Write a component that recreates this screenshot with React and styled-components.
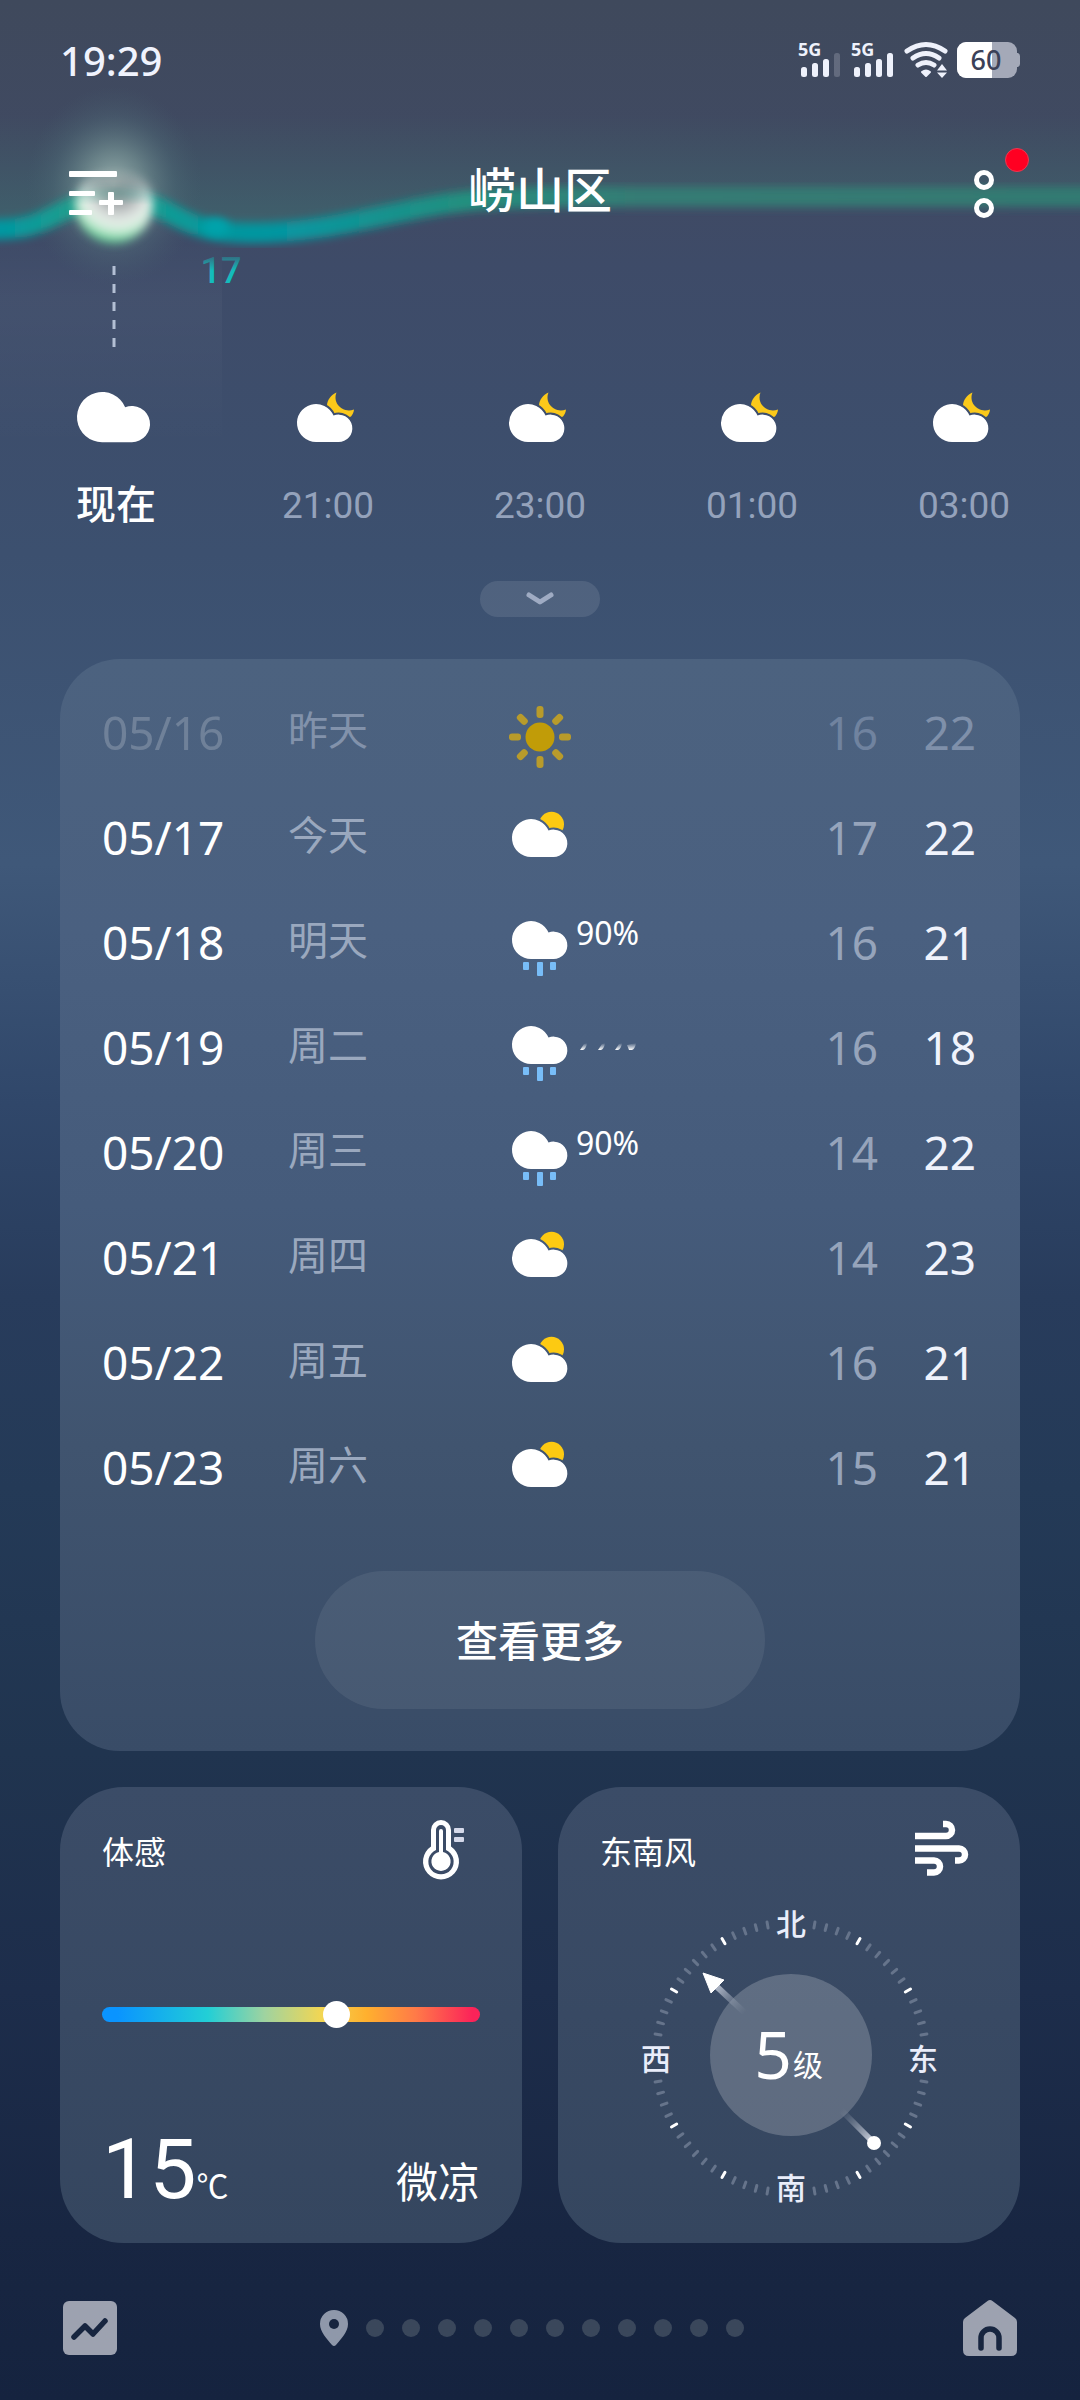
import styled, { createGlobalStyle } from "styled-components";

const CLOUD = "M19 38A19 19 0 1 1 36.5 11.6A13.7 13.7 0 1 1 41.3 38Z";

const hours = [
  { label: "现在", icon: "cloud" },
  { label: "21:00", icon: "night" },
  { label: "23:00", icon: "night" },
  { label: "01:00", icon: "night" },
  { label: "03:00", icon: "night" },
];

const days = [
  { date: "05/16", day: "昨天", icon: "sun", low: 16, high: 22, past: true },
  { date: "05/17", day: "今天", icon: "partly", low: 17, high: 22 },
  { date: "05/18", day: "明天", icon: "rain", rain: "90%", low: 16, high: 21 },
  { date: "05/19", day: "周二", icon: "rain", rolling: true, low: 16, high: 18 },
  { date: "05/20", day: "周三", icon: "rain", rain: "90%", low: 14, high: 22 },
  { date: "05/21", day: "周四", icon: "partly", low: 14, high: 23 },
  { date: "05/22", day: "周五", icon: "partly", low: 16, high: 21 },
  { date: "05/23", day: "周六", icon: "partly", low: 15, high: 21 },
];

export default function App() {
  return (
    <Page>
      <GlobalStyle />
      <TemperatureCurve />
      <StatusBar>
        <Clock>19:29</Clock>
        <StatusIcons>
          <Signal bars={3} />
          <Signal bars={4} />
          <Wifi />
          <Battery />
        </StatusIcons>
      </StatusBar>

      <Header>
        <IconButton aria-label="城市管理">
          <svg width="60" height="60" viewBox="0 0 60 60" fill="#fff">
            <rect x="3" y="11" width="48" height="6" rx="1" />
            <rect x="3" y="31" width="26" height="5" rx="1" />
            <rect x="3" y="50" width="23" height="5" rx="1" />
            <rect x="33" y="40" width="24" height="5" rx="1" />
            <rect x="42" y="32" width="6" height="23" rx="1" />
          </svg>
        </IconButton>
        <Title>崂山区</Title>
        <IconButton aria-label="更多">
          <svg
            width="60"
            height="60"
            viewBox="0 0 60 60"
            fill="none"
            stroke="#fff"
            strokeWidth="5"
          >
            <circle cx="30" cy="20" r="7.5" />
            <circle cx="30" cy="48" r="7.5" />
          </svg>
          <RedDot />
        </IconButton>
      </Header>

      <HourList>
        {hours.map((hour) => (
          <Hour key={hour.label}>
            <HourIcon type={hour.icon} />
            <HourLabel $now={hour.icon === "cloud"}>{hour.label}</HourLabel>
          </Hour>
        ))}
      </HourList>

      <ExpandButton aria-label="展开">
        <svg width="30" height="16" viewBox="0 0 30 16" fill="none">
          <path
            d="M4 4L15 11L26 4"
            stroke="#9fabc3"
            strokeWidth="5"
            strokeLinecap="round"
            strokeLinejoin="round"
          />
        </svg>
      </ExpandButton>

      <ForecastCard>
        <Forecast>
          <tbody>
            {days.map((item) => (
              <DayRow key={item.date}>
                <DateCell $past={item.past}>{item.date}</DateCell>
                <DayCell $past={item.past}>{item.day}</DayCell>
                <WeatherCell>
                  <DayIcon type={item.icon} />
                  {item.rain && <Chance>{item.rain}</Chance>}
                  {item.rolling && <RollingChance />}
                </WeatherCell>
                <LowCell $past={item.past}>{item.low}</LowCell>
                <HighCell $past={item.past}>{item.high}</HighCell>
              </DayRow>
            ))}
          </tbody>
        </Forecast>
        <MoreButton>查看更多</MoreButton>
      </ForecastCard>

      <Cards>
        <SmallCard>
          <CardHead>
            <label htmlFor="feels">体感</label>
            <Thermometer />
          </CardHead>
          <Slider id="feels" type="range" min="0" max="100" defaultValue="63" />
          <FeelsRow>
            <Degrees>
              15<small>℃</small>
            </Degrees>
            <Feeling>微凉</Feeling>
          </FeelsRow>
        </SmallCard>
        <SmallCard>
          <CardHead>
            <span>东南风</span>
            <WindIcon />
          </CardHead>
          <Compass />
        </SmallCard>
      </Cards>

      <Footer>
        <FooterButton aria-label="趋势">
          <svg width="54" height="54" viewBox="0 0 54 54">
            <rect width="54" height="54" rx="6" fill="#9da2b0" />
            <path
              d="M11 36L22 25L30 33L42 20"
              fill="none"
              stroke="#17253f"
              strokeWidth="5.5"
              strokeLinecap="round"
              strokeLinejoin="round"
            />
          </svg>
        </FooterButton>
        <Pager>
          <svg width="28" height="36" viewBox="0 0 28 36">
            <path
              d="M14 0A14 14 0 0 0 0 14C0 22 7 29 12 35Q14 37 16 35C21 29 28 22 28 14A14 14 0 0 0 14 0Z"
              fill="#8f98aa"
            />
            <circle cx="14" cy="14" r="5" fill="#17253f" />
          </svg>
          {Array.from({ length: 11 }, (_, i) => (
            <PageDot key={i} />
          ))}
        </Pager>
        <FooterButton aria-label="首页">
          <svg width="54" height="56" viewBox="0 0 54 56">
            <path
              d="M24.5 1Q27 -.8 29.5 1L52 18Q54 19.5 54 22V50Q54 56 48 56H6Q0 56 0 50V22Q0 19.5 2 18Z"
              fill="#9da2b0"
            />
            <path
              d="M18 48V38A9 9 0 0 1 36 38V48"
              fill="none"
              stroke="#17253f"
              strokeWidth="5.5"
              strokeLinecap="round"
            />
          </svg>
        </FooterButton>
      </Footer>
    </Page>
  );
}

function TemperatureCurve() {
  const line =
    "M-20 229C40 233 50 214 76 206C100 198 128 198 154 206C178 214 190 233 250 233C340 233 400 206 480 200C540 196 600 197 700 197H1100";
  return (
    <CurveSvg viewBox="0 0 1080 480" aria-hidden="true">
      <defs>
        <linearGradient id="stroke" x1="0" x2="1080" gradientUnits="userSpaceOnUse">
          <stop offset="0" stopColor="#0098a2" />
          <stop offset=".09" stopColor="#2a9f86" />
          <stop offset=".2" stopColor="#00989f" />
          <stop offset=".27" stopColor="#0796a0" />
          <stop offset=".43" stopColor="#22907f" />
          <stop offset=".6" stopColor="#367b74" />
          <stop offset="1" stopColor="#337a72" />
        </linearGradient>
        <linearGradient id="haze" x1="0" y1="115" x2="0" y2="225" gradientUnits="userSpaceOnUse">
          <stop offset="0" stopColor="#3f6a6b" stopOpacity="0" />
          <stop offset="1" stopColor="#3f6f70" stopOpacity=".6" />
        </linearGradient>
        <radialGradient id="halo">
          <stop offset="0" stopColor="#a3bab6" stopOpacity=".95" />
          <stop offset=".35" stopColor="#7d9999" stopOpacity=".65" />
          <stop offset=".7" stopColor="#54727c" stopOpacity=".3" />
          <stop offset="1" stopColor="#46606e" stopOpacity="0" />
        </radialGradient>
        <radialGradient id="ball" cx=".55" cy=".3" r=".7">
          <stop offset="0" stopColor="#89898f" />
          <stop offset=".3" stopColor="#a9adaf" />
          <stop offset=".6" stopColor="#e6ece8" />
          <stop offset=".78" stopColor="#d0eddb" />
          <stop offset=".92" stopColor="#74d6a0" />
          <stop offset="1" stopColor="#4fc18b" />
        </radialGradient>
        <linearGradient id="ball-fade" x1="0" y1="165" x2="0" y2="205" gradientUnits="userSpaceOnUse">
          <stop offset="0" stopColor="#000" />
          <stop offset="1" stopColor="#fff" />
        </linearGradient>
        <mask id="ball-mask" maskUnits="userSpaceOnUse" x="40" y="140" width="150" height="130">
          <rect x="40" y="140" width="150" height="130" fill="url(#ball-fade)" />
        </mask>
        <linearGradient id="label" x1="0" y1="254" x2="0" y2="282" gradientUnits="userSpaceOnUse">
          <stop offset="0" stopColor="#14bcbc" stopOpacity=".2" />
          <stop offset=".6" stopColor="#14bcbc" />
        </linearGradient>
        <linearGradient id="panel" x1="0" y1="240" x2="0" y2="450" gradientUnits="userSpaceOnUse">
          <stop offset="0" stopColor="#fff" stopOpacity="0" />
          <stop offset=".3" stopColor="#fff" stopOpacity=".03" />
          <stop offset="1" stopColor="#fff" stopOpacity="0" />
        </linearGradient>
        <filter id="soft" x="-20%" y="-40%" width="140%" height="180%">
          <feGaussianBlur stdDeviation="4" />
        </filter>
        <filter id="softer" x="-30%" y="-30%" width="160%" height="160%">
          <feGaussianBlur stdDeviation="5" />
        </filter>
      </defs>
      <rect y="240" width="222" height="210" fill="url(#panel)" />
      <path d={`${line}V100H-20Z`} fill="url(#haze)" />
      <ellipse cx="114" cy="186" rx="88" ry="100" fill="url(#halo)" />
      <path d={line} fill="none" stroke="url(#stroke)" strokeWidth="20" filter="url(#soft)" />
      <ellipse cx="216" cy="227" rx="13" ry="9" fill="#00a3ab" filter="url(#soft)" />
      <g mask="url(#ball-mask)">
        <circle cx="114" cy="204" r="39" fill="url(#ball)" filter="url(#softer)" />
      </g>
      <line
        x1="114"
        y1="266"
        x2="114"
        y2="348"
        stroke="#b3bfd4"
        strokeWidth="3"
        strokeDasharray="9 9"
      />
      <CurveLabel x="221" y="283" fill="url(#label)">
        17
      </CurveLabel>
    </CurveSvg>
  );
}

function Signal({ bars }) {
  return (
    <svg width="44" height="38" viewBox="0 0 44 38" fill="#eef1fb">
      <text x="0" y="15" fontSize="18" fontWeight="700">
        5G
      </text>
      {[26, 22, 18, 12].map((y, i) => (
        <rect
          key={y}
          x={3 + i * 11}
          y={y}
          width="6"
          height={36 - y}
          rx="2.5"
          opacity={i < bars ? 1 : 0.2}
        />
      ))}
    </svg>
  );
}

function Wifi() {
  return (
    <svg width="44" height="38" viewBox="0 0 44 38" fill="none" stroke="#eef1fb">
      <g strokeWidth="5" strokeLinecap="round">
        <path d="M3 10Q22 -3 41 10" />
        <path d="M9 17Q22 8 35 17" />
        <path d="M14 24Q22 19 30 24" />
      </g>
      <path d="M18 31Q22 28 26 31L22 35Z" fill="#eef1fb" strokeWidth="2" strokeLinejoin="round" />
      <path d="M38 23L43 29.5H33ZM38 37L33 31.5H43Z" fill="#eef1fb" stroke="none" />
    </svg>
  );
}

function Battery() {
  return (
    <svg width="63" height="36" viewBox="0 0 63 36">
      <clipPath id="charge">
        <rect width="35" height="36" />
      </clipPath>
      <rect width="60" height="36" rx="9" fill="#a4a9b8" />
      <path d="M60 11H61Q63 12 63 14V22Q63 24 61 25H60Z" fill="#a4a9b8" />
      <rect width="60" height="36" rx="9" fill="#fff" clipPath="url(#charge)" />
      <text x="29" y="28" fontSize="27" fontWeight="500" textAnchor="middle" fill="#3b4158">
        60
      </text>
    </svg>
  );
}

function Cloud({ x, y, scale = 1 }) {
  return <path d={CLOUD} transform={`translate(${x} ${y}) scale(${scale})`} fill="#fff" />;
}

// hides whatever is behind the cloud, plus a thin gap around its edge
function CloudMask({ id }) {
  return (
    <mask id={id} maskUnits="userSpaceOnUse" x="-10" y="-20" width="80" height="70">
      <rect x="-10" y="-20" width="80" height="70" fill="#fff" />
      <path d={CLOUD} fill="#000" stroke="#000" strokeWidth="4" />
    </mask>
  );
}

function HourIcon({ type }) {
  return (
    <svg width="80" height="60" viewBox="0 0 80 60">
      {type === "cloud" ? (
        <Cloud x={1} y={6} scale={1.32} />
      ) : (
        <g transform="translate(9 18)">
          <CloudMask id="moon-mask" />
          <path
            d="M39.5 -11.5C34 -9 30 -4 30 2C33 14 47 17 54 12.5C55.5 10.5 57 8 57 5.5C50 8 44 5 41 1C38 -3 38 -8 39.5 -11.5Z"
            fill="#fbc91a"
            mask="url(#moon-mask)"
          />
          <Cloud x={0} y={0} />
        </g>
      )}
    </svg>
  );
}

function DayIcon({ type }) {
  return (
    <svg width="64" height="72" viewBox="0 0 64 72">
      {type === "sun" && (
        <g>
          <circle cx="32" cy="41" r="14.5" fill="#c19c08" />
          {[0, 45, 90, 135, 180, 225, 270, 315].map((angle) => (
            <rect
              key={angle}
              x="28.5"
              y="10"
              width="7"
              height="12"
              rx="3"
              fill="#b89b2b"
              transform={`rotate(${angle} 32 41)`}
            />
          ))}
        </g>
      )}
      {type === "partly" && (
        <g transform="translate(4 18)">
          <CloudMask id="sun-mask" />
          <circle cx="39.5" cy="5.3" r="12.5" fill="#fdca12" mask="url(#sun-mask)" />
          <Cloud x={0} y={0} />
        </g>
      )}
      {type === "rain" && (
        <g fill="#78bdf8">
          <Cloud x={4} y={15} />
          <rect x="15" y="56" width="6" height="8" rx="1" />
          <rect x="29" y="56" width="6" height="14" rx="1" />
          <rect x="42" y="56" width="6" height="8" rx="1" />
        </g>
      )}
    </svg>
  );
}

// the counter is still rolling in, only the feet of the digits show
function RollingChance() {
  return (
    <svg width="60" height="12" viewBox="0 0 60 12">
      <defs>
        <linearGradient id="roll" x1="0" y1="0" x2="0" y2="1">
          <stop offset="0" stopColor="#fff" stopOpacity="0" />
          <stop offset="1" stopColor="#fff" />
        </linearGradient>
      </defs>
      <g fill="url(#roll)">
        <path d="M8 3L11 2Q10 8 7 9H4Z" />
        <path d="M26 3L29 2Q28 8 25 9H22Z" />
        <path d="M43 3L46 2Q45 8 42 9H39Z" />
        <path d="M51 4L60 2Q59 8 56 9H53Z" />
      </g>
    </svg>
  );
}

function Thermometer() {
  return (
    <svg width="72" height="60" viewBox="0 0 72 60">
      <g transform="translate(14 0)">
        <path d="M9 10A10 10 0 0 1 29 10V26.5A18 18 0 1 1 9 26.5Z" fill="#fff" />
        <path d="M14 10A5 5 0 0 1 24 10V30A12.7 12.7 0 1 1 14 30Z" fill="#3b4b66" />
        <path d="M17 11A2 2 0 0 1 21 11V32A9.6 9.6 0 1 1 17 32Z" fill="#fff" />
        <rect x="32" y="8" width="10" height="5" rx="1" fill="#d5d9ea" />
        <rect x="32" y="17" width="10" height="5" rx="1" fill="#d5d9ea" />
      </g>
    </svg>
  );
}

function WindIcon() {
  return (
    <svg width="72" height="60" viewBox="0 0 72 60" fill="none" stroke="#fff" strokeWidth="6.5">
      <g transform="translate(8 0)" strokeLinejoin="round">
        <path d="M1 16H32A6 6 0 0 0 32 4H29" />
        <path d="M1 28.5H45A6 6 0 0 1 45 40.5H41" />
        <path d="M1 40.5H20A6 6 0 0 1 20 52.5H13" />
      </g>
    </svg>
  );
}

function Compass() {
  const ticks = [];
  // the marks right beside the four labels are left out
  for (let angle = 0; angle < 360; angle += 5) {
    const offset = angle % 90;
    if (offset > 5 && offset < 85) ticks.push(angle);
  }
  return (
    <CompassSvg viewBox="-152 -150 300 300" textAnchor="middle">
      <defs>
        <linearGradient id="head" x1="-76" y1="-70" x2="-46" y2="-42" gradientUnits="userSpaceOnUse">
          <stop offset="0" stopColor="#b9c0cf" />
          <stop offset="1" stopColor="#8b95a5" stopOpacity="0" />
        </linearGradient>
        <linearGradient id="tail" x1="50" y1="55" x2="80" y2="85" gradientUnits="userSpaceOnUse">
          <stop offset="0" stopColor="#8b95a5" stopOpacity="0" />
          <stop offset="1" stopColor="#c6ccd9" />
        </linearGradient>
      </defs>
      <g transform="translate(0 3)">
        {ticks.map((angle) => (
          <line
            key={angle}
            y1="-132"
            y2="-138"
            stroke={angle % 30 === 0 ? "#fff" : "#66748b"}
            strokeWidth="3"
            strokeLinecap="round"
            transform={`rotate(${angle})`}
          />
        ))}
      </g>
      <circle r="81" fill="#fff" fillOpacity=".2" />
      <path d="M-76 -70L-46 -42" stroke="url(#head)" strokeWidth="6" />
      <path d="M-88 -82L-67 -75L-80 -62Z" fill="#fff" stroke="#fff" strokeLinejoin="round" />
      <path d="M50 55L82 87" stroke="url(#tail)" strokeWidth="6" />
      <circle cx="83" cy="88" r="7" fill="#fff" />
      <CompassLabels>
        <text y="-120">北</text>
        <text x="-135" y="15">
          西
        </text>
        <text x="132" y="15">
          东
        </text>
        <text y="144">南</text>
      </CompassLabels>
      <text x="-18" y="24" fontSize="66" fill="#fff">
        5
      </text>
      <text x="17" y="21" fontSize="30" fill="#fff">
        级
      </text>
    </CompassSvg>
  );
}

const GlobalStyle = createGlobalStyle`
  * {
    box-sizing: border-box;
  }
  body {
    margin: 0;
    background: #15233f;
    color: #fff;
    font-family: "Noto Sans", "Noto Sans CJK SC", sans-serif;
  }
  button {
    padding: 0;
    border: 0;
    background: none;
    color: inherit;
    font: inherit;
    cursor: pointer;
  }
  svg {
    display: block;
    overflow: visible;
  }
`;

const Page = styled.main`
  position: relative;
  min-height: 100vh;
  display: flex;
  flex-direction: column;
  overflow: hidden;
  background: linear-gradient(
    #3f495c 0%,
    #404a63 7%,
    #3e4b68 11%,
    #3c506f 23%,
    #3f5879 36%,
    #30476a 46%,
    #283c5c 54%,
    #243a57 62%,
    #20344f 73%,
    #1d2d4b 83%,
    #182642 93%,
    #15233f 100%
  );
`;
const CurveSvg = styled.svg`
  position: absolute;
  top: 0;
  left: 0;
  width: 100%;
`;
const CurveLabel = styled.text`
  font-family: Roboto, sans-serif;
  font-size: 36px;
  font-weight: 500;
  text-anchor: middle;
`;
const StatusBar = styled.div`
  position: relative;
  display: flex;
  justify-content: space-between;
  align-items: center;
  height: 120px;
  padding: 0 60px;
`;
const Clock = styled.span`
  font-size: 40px;
  font-weight: 500;
  color: #f0f3fd;
`;
const StatusIcons = styled.div`
  display: flex;
  align-items: center;
  gap: 9px;
`;
const Header = styled.header`
  position: relative;
  display: flex;
  justify-content: space-between;
  align-items: center;
  height: 140px;
  padding: 0 66px;
`;
const Title = styled.h1`
  margin: 0;
  font-size: 48px;
  font-weight: 500;
  line-height: 60px;
`;
const IconButton = styled.button`
  position: relative;
  width: 60px;
  height: 60px;
`;
const RedDot = styled.span`
  position: absolute;
  top: -12px;
  right: -15px;
  width: 24px;
  height: 24px;
  border-radius: 50%;
  border: 1px solid #e83a52;
  background: #ff0022;
`;
const HourList = styled.ul`
  display: grid;
  grid-template-columns: repeat(5, 1fr);
  margin: 126px 0 0;
  padding: 0 10px;
  list-style: none;
`;
const Hour = styled.li`
  display: flex;
  flex-direction: column;
  align-items: center;
  gap: 36px;
`;
const HourLabel = styled.span`
  font-family: Roboto, "Noto Sans CJK SC", sans-serif;
  font-size: ${(props) => (props.$now ? "40px" : "37px")};
  font-weight: ${(props) => (props.$now ? 500 : 400)};
  line-height: 48px;
  color: ${(props) => (props.$now ? "#fff" : "#94a2bb")};
`;
const ExpandButton = styled.button`
  display: flex;
  align-items: center;
  justify-content: center;
  align-self: center;
  width: 120px;
  height: 36px;
  margin-top: 51px;
  border-radius: 18px;
  background: rgba(255, 255, 255, 0.1);
`;
const ForecastCard = styled.section`
  display: flex;
  flex-direction: column;
  align-items: center;
  margin: 42px 60px 0;
  padding: 20px 42px 42px;
  border-radius: 60px;
  background: linear-gradient(
    #4c627f,
    #4a6080 25%,
    #455b7b 50%,
    #40546f 72%,
    #394c67
  );
`;
const Forecast = styled.table`
  display: block;
  width: 100%;

  tbody {
    display: block;
  }
`;
const DayRow = styled.tr`
  display: grid;
  grid-template-columns: 186px calc(50% - 218px) 1fr 98px 98px;
  align-items: center;
  height: 105px;
`;
const Cell = styled.td`
  padding: 0;
  line-height: 60px;
`;
const DateCell = styled(Cell)`
  font-size: 46px;
  opacity: ${(props) => (props.$past ? 0.2 : 1)};
`;
const DayCell = styled(Cell)`
  padding-bottom: 4px;
  font-size: 40px;
  color: ${(props) => (props.$past ? "#8292ab" : "#9aa8be")};
`;
const WeatherCell = styled(Cell)`
  display: flex;
  align-items: center;
  gap: 4px;
`;
const Chance = styled.span`
  align-self: flex-start;
  font-size: 32px;
  line-height: 54px;
`;
const TempCell = styled(Cell)`
  padding-right: 2px;
  font-size: 46px;
  text-align: right;
`;
const LowCell = styled(TempCell)`
  color: ${(props) => (props.$past ? "#70839f" : "#96a4bb")};
`;
const HighCell = styled(TempCell)`
  color: ${(props) => (props.$past ? "#7f90aa" : "#f0f3fc")};
`;
const MoreButton = styled.button`
  width: 450px;
  height: 138px;
  margin-top: 52px;
  padding-bottom: 4px;
  border-radius: 69px;
  background: rgba(255, 255, 255, 0.07);
  font-size: 42px;
  font-weight: 500;
`;
const Cards = styled.div`
  display: grid;
  grid-template-columns: 1fr 1fr;
  gap: 36px;
  margin: 36px 60px 0;
`;
const SmallCard = styled.section`
  display: flex;
  flex-direction: column;
  padding: 33px 42px 26px;
  border-radius: 64px;
  background: linear-gradient(#3b4c67, #35465f);
`;
const CardHead = styled.div`
  display: flex;
  justify-content: space-between;
  align-items: center;
  height: 60px;
  font-size: 32px;
`;
const Slider = styled.input`
  appearance: none;
  width: 100%;
  height: 28px;
  margin: 120px 0 0;
  background: transparent;

  &::-webkit-slider-runnable-track {
    height: 15px;
    border-radius: 8px;
    background: linear-gradient(
      90deg,
      #0a94ff 4%,
      #22cfd6 28%,
      #9fd3a0 43%,
      #f2d653 58%,
      #ffb02e 70%,
      #ff7a48 83%,
      #fb2359 98%
    );
  }
  &::-webkit-slider-thumb {
    appearance: none;
    width: 27px;
    height: 27px;
    margin-top: -6px;
    border-radius: 50%;
    background: #fff;
  }
`;
const FeelsRow = styled.div`
  display: flex;
  justify-content: space-between;
  align-items: baseline;
  margin-top: auto;
  line-height: 60px;
`;
const Degrees = styled.span`
  font-family: Roboto, "Noto Sans CJK SC", sans-serif;
  font-size: 84px;

  small {
    font-size: 32px;
  }
`;
const Feeling = styled.span`
  font-size: 42px;
`;
const CompassSvg = styled.svg`
  align-self: center;
  width: 300px;
  margin: 25px 0 12px;
`;
const CompassLabels = styled.g`
  font-size: 30px;
  font-weight: 500;
  fill: #e9edfa;
`;
const Footer = styled.footer`
  display: flex;
  justify-content: space-between;
  align-items: center;
  padding: 57px 63px 44px;
`;
const FooterButton = styled.button`
  width: 54px;
`;
const Pager = styled.div`
  display: flex;
  align-items: center;
  gap: 18px;
  padding-right: 16px;
`;
const PageDot = styled.span`
  width: 18px;
  height: 18px;
  border-radius: 50%;
  background: #3a475b;
`;
